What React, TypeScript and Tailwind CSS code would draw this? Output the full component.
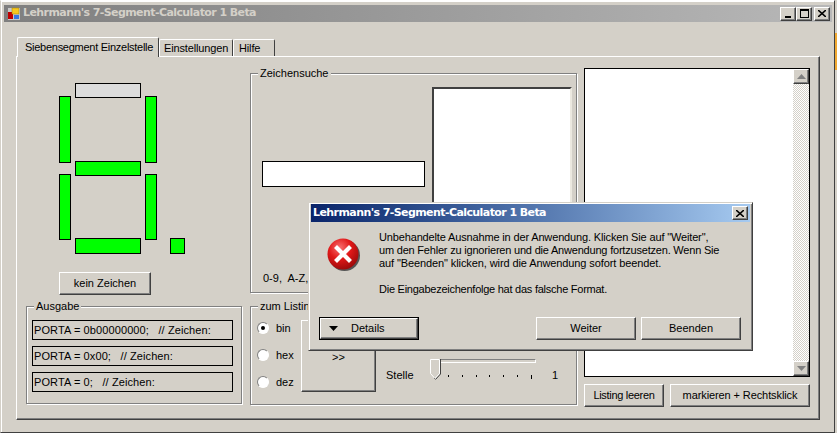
const raised = 'border border-t-white border-l-white border-r-[#404040] border-b-[#404040] shadow-[inset_-1px_-1px_0_#808080] bg-[#d4d0c8]';
const etched = 'border border-[#808080] shadow-[1px_1px_0_#fff,inset_1px_1px_0_#fff]';
const segOn = 'bg-[#00ff00] border border-black';

function GroupBox({ title, className, children }: { title: string; className: string; children: React.ReactNode }) {
  return (
    <div className={`relative ${etched} ${className}`}>
      <span className="absolute left-[7px] top-[-8px] bg-[#d4d0c8] px-[2px] leading-[14px]">{title}</span>
      {children}
    </div>
  );
}

function OutputLine({ text }: { text: string }) {
  return (
    <div className="h-[20px] w-[201px] border border-black pl-[1px] leading-[18px] tracking-[0.1px] whitespace-pre">{text}</div>
  );
}

function Radio({ label, checked }: { label: string; checked?: boolean }) {
  return (
    <div className="flex h-[14px] items-center gap-[7px]">
      <div className="flex h-[12px] w-[12px] items-center justify-center rounded-full border border-t-[#808080] border-l-[#808080] border-r-white border-b-white bg-white">
        {checked && <div className="h-[4px] w-[4px] rounded-full bg-black" />}
      </div>
      <span>{label}</span>
    </div>
  );
}

function Scrollbar() {
  const btn = `flex h-[15px] w-[16px] items-center justify-center ${raised}`;
  return (
    <div className="flex w-[16px] flex-col bg-[repeating-conic-gradient(#ffffff_0_25%,#d4d0c8_0_50%)] bg-[length:2px_2px]">
      <div className={btn}>
        <svg width="9" height="5" viewBox="0 0 9 5"><path d="M4.5 0 9 5H0z" fill="#808080" /></svg>
      </div>
      <div className="flex-1" />
      <div className={btn}>
        <svg width="9" height="5" viewBox="0 0 9 5"><path d="M0 0h9L4.5 5z" fill="#808080" /></svg>
      </div>
    </div>
  );
}

function Slider() {
  const ticks = [0, 1, 2, 3, 4, 5, 6, 7];
  return (
    <div className="relative w-[108px]">
      <div className="ml-[4px] mt-[7px] h-[4px] w-[102px] border border-t-[#808080] border-l-[#808080] border-r-white border-b-white" />
      <svg className="absolute left-0 top-0" width="11" height="21" viewBox="0 0 11 21">
        <path d="M.5.5h9v14l-4.5 5-4.5-5z" fill="#d4d0c8" stroke="#fff" />
        <path d="M10.5 0v15l-5 5.5" fill="none" stroke="#404040" />
      </svg>
      <div className="ml-[4px] mt-[12px] flex w-[98px] items-start justify-between">
        {ticks.map((t) => (
          <div key={t} className={`w-px bg-black ${t === 0 || t === 7 ? 'h-[4px]' : 'h-[2px]'}`} />
        ))}
      </div>
    </div>
  );
}

function ErrorIcon() {
  return (
    <svg width="34" height="34" viewBox="0 0 34 34">
      <defs>
        <radialGradient id="err" cx="0.4" cy="0.3" r="0.8">
          <stop offset="0" stopColor="#f87070" />
          <stop offset="0.45" stopColor="#e01818" />
          <stop offset="1" stopColor="#8c0808" />
        </radialGradient>
      </defs>
      <circle cx="17.5" cy="17.5" r="15.5" fill="#555555" />
      <circle cx="16" cy="16" r="15.5" fill="url(#err)" />
      <path d="M10 10 22 22M22 10 10 22" stroke="#fff" strokeWidth="4.2" strokeLinecap="square" />
    </svg>
  );
}

function ErrorDialog() {
  return (
    <div className="absolute left-[308px] top-[202px] flex h-[149px] w-[445px] flex-col border border-t-[#d4d0c8] border-l-[#d4d0c8] border-r-[#404040] border-b-[#404040] bg-[#d4d0c8] p-px shadow-[inset_1px_1px_0_#fff,inset_-1px_-1px_0_#808080]">
      <div className="ml-px flex h-[18px] w-[439px] items-center justify-between bg-gradient-to-r from-[#0a246a] to-[#a6caf0] pl-[2px] pr-[2px] font-['DejaVu_Sans'] text-[11px] font-bold tracking-[-0.58px] text-white">
        <span>Lehrmann's 7-Segment-Calculator 1 Beta</span>
        <div className={`flex h-[14px] w-[16px] items-center justify-center ${raised}`}>
          <svg width="8" height="7" viewBox="0 0 8 7"><path d="M0 0 8 7M8 0 0 7" stroke="#000" strokeWidth="1.6" /></svg>
        </div>
      </div>
      <div className="flex h-[95px]">
        <div className="ml-[17px] mt-[16px] h-[34px] w-[34px]">
          <ErrorIcon />
        </div>
        <div className="ml-[18px] mt-[9px] leading-[13px] tracking-[-0.15px]">
          <p>Unbehandelte Ausnahme in der Anwendung. Klicken Sie auf "Weiter",</p>
          <p className="tracking-[-0.2px]">um den Fehler zu ignorieren und die Anwendung fortzusetzen. Wenn Sie</p>
          <p className="tracking-[-0.1px]">auf "Beenden" klicken, wird die Anwendung sofort beendet.</p>
          <p className="mt-[13px] tracking-[-0.25px]">Die Eingabezeichenfolge hat das falsche Format.</p>
        </div>
      </div>
      <div className="ml-[9px] flex">
        <div className="flex h-[23px] w-[100px] items-center border border-black">
          <div className={`flex h-full w-full items-center ${raised}`}>
            <svg className="ml-[8px]" width="9" height="5" viewBox="0 0 9 5"><path d="M0 0h9L4.5 5z" fill="#000" /></svg>
            <span className="ml-[13px]">Details</span>
          </div>
        </div>
        <button className={`ml-[117px] h-[23px] w-[100px] ${raised}`}>Weiter</button>
        <button className={`ml-[5px] h-[23px] w-[100px] ${raised}`}>Beenden</button>
      </div>
    </div>
  );
}

export default function App() {
  return (
    <div className="relative flex h-[433px] w-[837px] overflow-hidden bg-[#d4d0c8] font-['Liberation_Sans'] text-[11px] text-black">
      {/* main window */}
      <div className="h-[433px] w-[835px] border border-t-white border-l-[#d4d0c8] border-r-[#404040] border-b-[#404040] pl-[3px] pr-[1px] pt-[4px] shadow-[inset_1px_1px_0_#fff]">
        <div className="flex h-[17px] w-[828px] items-center bg-gradient-to-r from-[#7f7f7f] to-[#b8b8b8]">
          <svg className="ml-[3px]" width="14" height="14" viewBox="0 0 14 14">
            <rect x=".5" y=".5" width="13" height="13" fill="#c8c8c8" stroke="#808080" />
            <rect x="1" y="5" width="5" height="7" fill="#c00000" />
            <rect x="5" y="1" width="7" height="6" fill="#f8c820" stroke="#a08000" strokeWidth=".5" />
            <rect x="7" y="8" width="5" height="4" fill="#3878e0" />
          </svg>
          <span className="ml-[2px] font-['DejaVu_Sans'] text-[11px] font-bold tracking-[-0.58px] text-[#d4d0c8]">
            Lehrmann's 7-Segment-Calculator 1 Beta
          </span>
          <div className="ml-auto mr-[2px] flex">
            <div className={`flex h-[14px] w-[16px] items-end justify-center pb-[2px] ${raised}`}>
              <div className="h-[2px] w-[6px] bg-black" />
            </div>
            <div className={`flex h-[14px] w-[16px] items-center justify-center ${raised}`}>
              <div className="h-[9px] w-[9px] border border-t-2 border-black" />
            </div>
            <div className={`ml-[2px] flex h-[14px] w-[16px] items-center justify-center ${raised}`}>
              <svg width="8" height="7" viewBox="0 0 8 7"><path d="M0 0 8 7M8 0 0 7" stroke="#000" strokeWidth="1.6" /></svg>
            </div>
          </div>
        </div>

        {/* tabs */}
        <div className="ml-[13px] mt-[15px] flex h-[19px] items-end tracking-[-0.15px] whitespace-nowrap">
          <div className="relative z-10 -mb-px h-[20px] w-[142px] rounded-t-[2px] border border-b-0 border-t-white border-l-white border-r-[#404040] bg-[#d4d0c8] pl-[7px] pt-[1px] leading-[16px] tracking-[-0.27px]">
            Siebensegment Einzelstelle
          </div>
          <div className="h-[17px] w-[74px] rounded-t-[2px] border border-b-0 border-t-white border-l-white border-r-[#404040] pl-[4px] leading-[17px]">
            Einstellungen
          </div>
          <div className="h-[17px] w-[42px] rounded-t-[2px] border border-b-0 border-t-white border-l-white border-r-[#404040] pl-[5px] leading-[17px]">
            Hilfe
          </div>
        </div>

        {/* tab page */}
        <div className="ml-[12px] flex h-[364px] w-[804px] border border-t-white border-l-white border-r-[#404040] border-b-[#404040] pl-[9px] shadow-[inset_-1px_-1px_0_#808080]">
          {/* left column */}
          <div className="w-[216px]">
            <div className="ml-[33px] mt-[26px] grid grid-cols-[12px_4px_66px_4px_12px_13px_15px] grid-rows-[13px_2px_63px_2px_11px_2px_62px_2px_14px]">
              <div className="col-start-3 row-start-1 row-end-3 border border-black bg-[#dcdcdc]" />
              <div className={`col-start-1 row-start-2 row-end-5 ${segOn}`} />
              <div className={`col-start-5 row-start-2 row-end-5 ${segOn}`} />
              <div className={`col-start-3 row-start-4 row-end-7 ${segOn}`} />
              <div className={`col-start-1 row-start-6 row-end-9 ${segOn}`} />
              <div className={`col-start-5 row-start-6 row-end-9 ${segOn}`} />
              <div className={`col-start-3 row-start-8 row-end-10 ${segOn}`} />
              <div className={`col-start-7 row-start-8 row-end-10 ${segOn}`} />
            </div>
            <button className={`ml-[33px] mt-[18px] h-[23px] w-[92px] ${raised}`}>kein Zeichen</button>
            <GroupBox title="Ausgabe" className="mt-[11px] h-[98px] w-[216px]">
              <div className="ml-[5px] mt-[13px] flex flex-col gap-[6px]">
                <OutputLine text="PORTA = 0b00000000;   // Zeichen:" />
                <OutputLine text="PORTA = 0x00;   // Zeichen:" />
                <OutputLine text="PORTA = 0;   // Zeichen:" />
              </div>
            </GroupBox>
          </div>

          {/* middle column */}
          <div className="ml-[8px] w-[327px]">
            <GroupBox title="Zeichensuche" className="mt-[16px] flex h-[220px] w-[327px] pl-[11px] pt-[13px]">
              <div className="w-[163px]">
                <div className="mt-[74px] h-[26px] w-[163px] border border-black bg-white" />
                <div className="ml-px mt-[84px] leading-[14px] whitespace-pre">0-9,  A-Z,</div>
              </div>
              <div className="ml-[7px] h-[190px] w-[140px] border-2 border-t-[#404040] border-l-[#404040] border-r-[#ece9e0] border-b-[#ece9e0] bg-white" />
            </GroupBox>
            <GroupBox title="zum Listing" className="mt-[13px] flex h-[99px] w-[327px] pl-[6px]">
              <div className="mt-[14px] flex w-[44px] flex-col gap-[13px]">
                <Radio label="bin" checked />
                <Radio label="hex" />
                <Radio label="dez" />
              </div>
              <div className={`mt-[13px] flex h-[72px] w-[75px] items-center justify-center pt-[2px] ${raised}`}>&gt;&gt;</div>
              <div className="ml-[10px] mt-[61px] w-[44px] leading-[14px]">Stelle</div>
              <div className="mt-[45px]">
                <Slider />
              </div>
              <div className="ml-[14px] mt-[61px] leading-[14px]">1</div>
            </GroupBox>
          </div>

          {/* right column */}
          <div className="ml-[7px] w-[226px]">
            <div className="mt-[11px] flex h-[309px] w-[226px] border border-black bg-white">
              <div className="flex-1" />
              <Scrollbar />
            </div>
            <div className="mt-[7px] flex gap-[6px]">
              <button className={`h-[23px] w-[80px] tracking-[-0.3px] ${raised}`}>Listing leeren</button>
              <button className={`h-[23px] w-[140px] tracking-[-0.1px] ${raised}`}>markieren + Rechtsklick</button>
            </div>
          </div>
        </div>
      </div>

      {/* sliver of the desktop right of the window */}
      <div className="flex w-[2px] flex-col">
        <div className="mt-[33px] h-[37px] w-[2px] bg-[#f0a830]" />
      </div>

      <ErrorDialog />
    </div>
  );
}
